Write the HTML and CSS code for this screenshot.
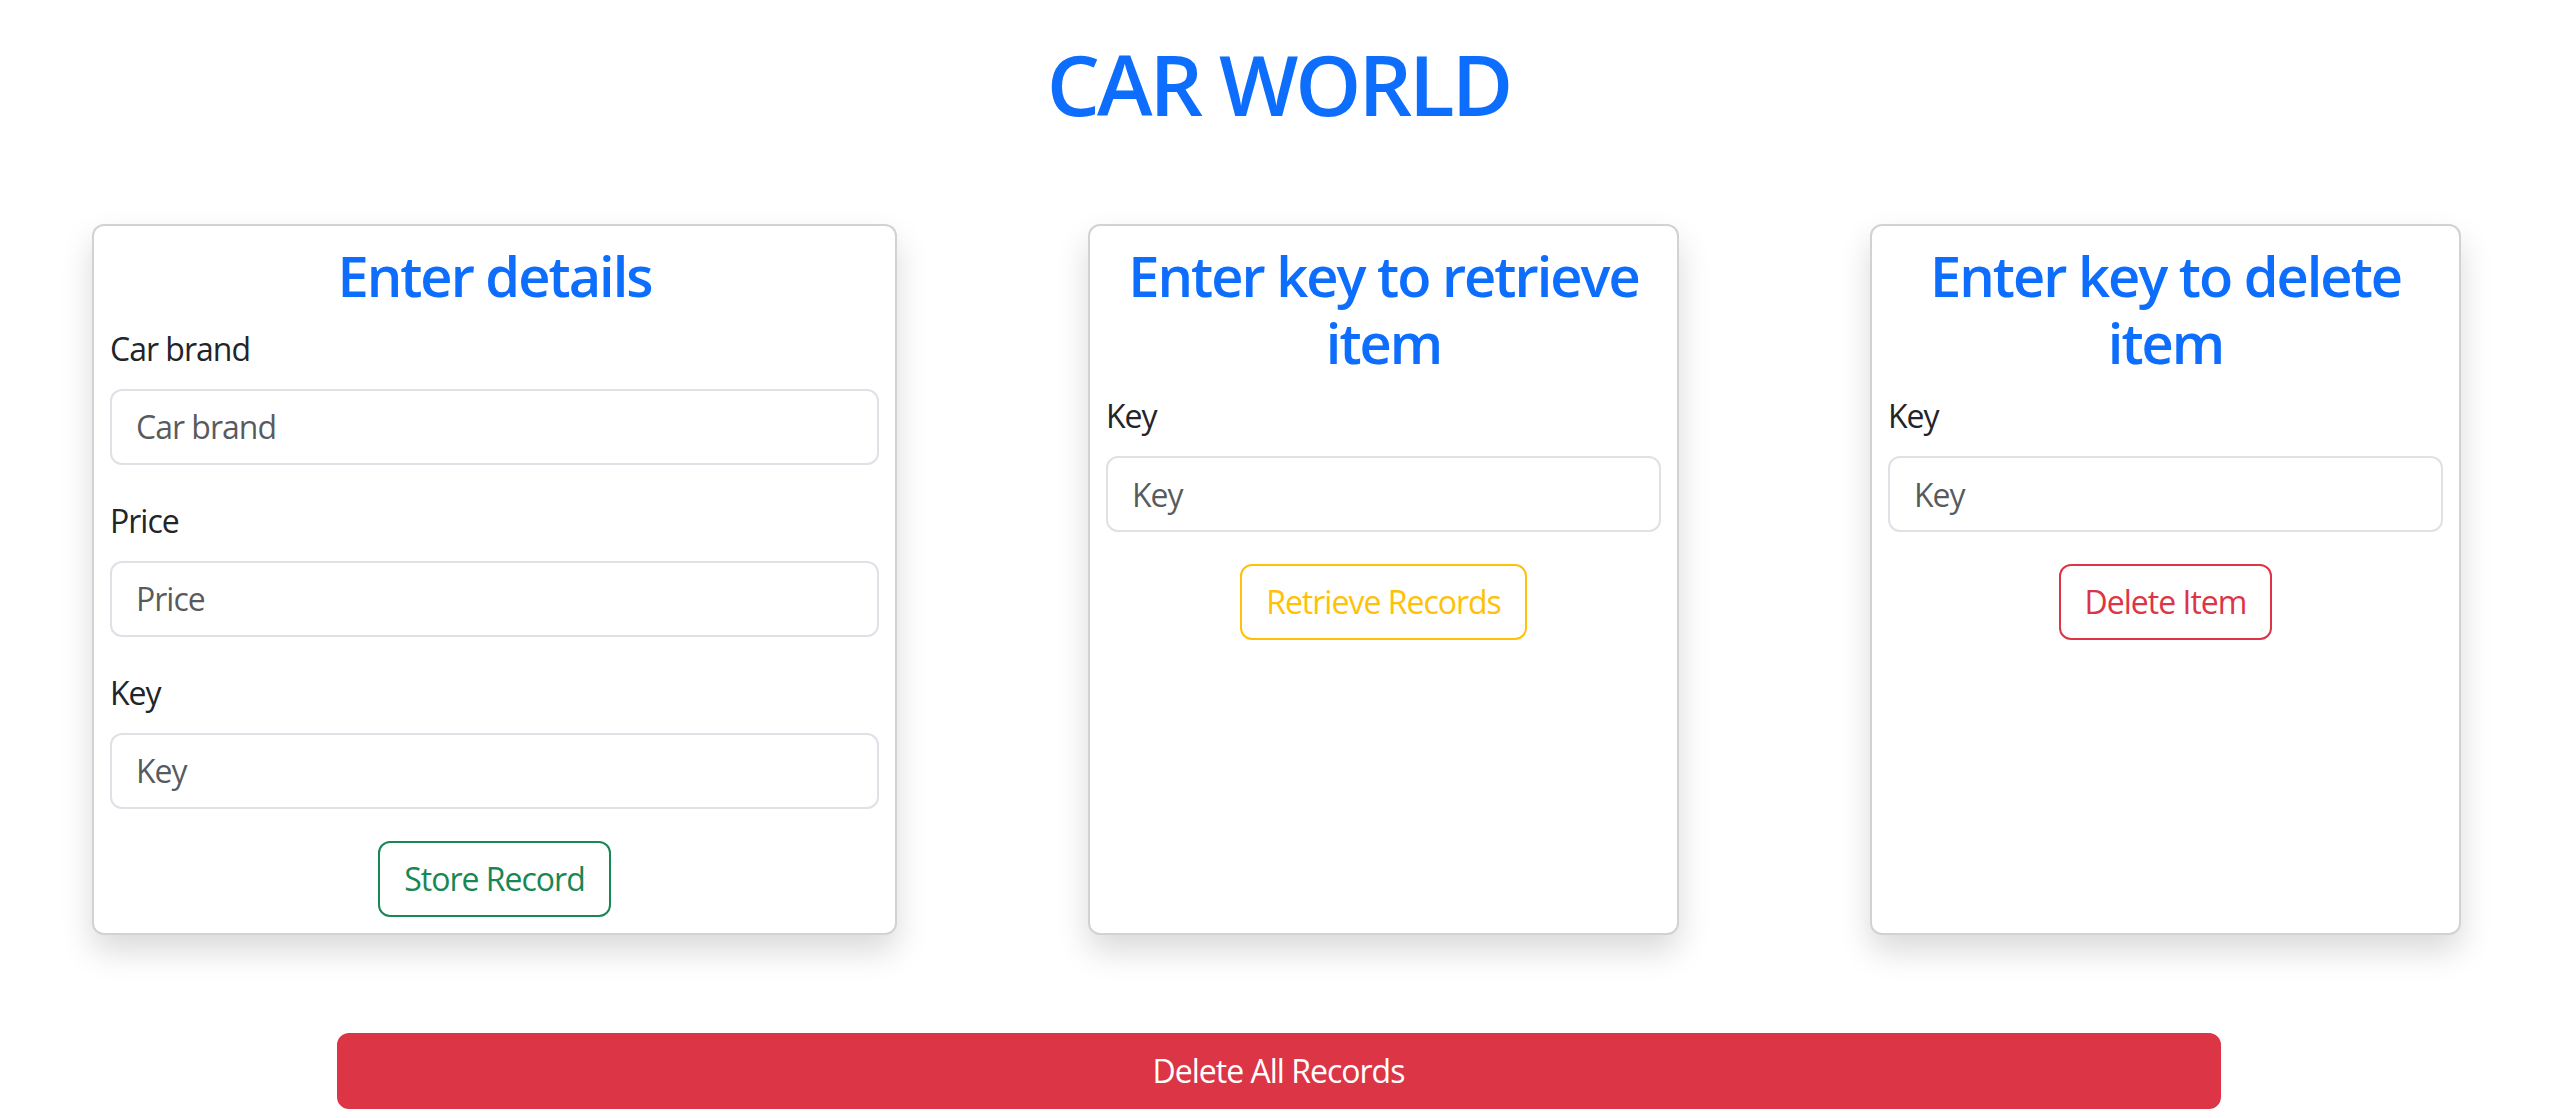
FILE: index.html
```html
<!DOCTYPE html>
<html lang="en">
<head>
<meta charset="utf-8">
<title>Car World</title>
<link rel="stylesheet" href="styles.css">
</head>
<body>
<div class="page">
  <h1 class="title">CAR WORLD</h1>
  <div class="cards">
    <div class="card card-wide">
      <h3 class="card-title">Enter details</h3>
      <div class="group">
        <label class="label">Car brand</label>
        <input class="field" type="text" placeholder="Car brand">
      </div>
      <div class="group">
        <label class="label">Price</label>
        <input class="field" type="text" placeholder="Price">
      </div>
      <div class="group">
        <label class="label">Key</label>
        <input class="field" type="text" placeholder="Key">
      </div>
      <div class="actions">
        <button class="btn btn-success">Store Record</button>
      </div>
    </div>
    <div class="card">
      <h3 class="card-title">Enter key to retrieve item</h3>
      <div class="group">
        <label class="label">Key</label>
        <input class="field" type="text" placeholder="Key">
      </div>
      <div class="actions">
        <button class="btn btn-warning">Retrieve Records</button>
      </div>
    </div>
    <div class="card">
      <h3 class="card-title">Enter key to delete item</h3>
      <div class="group">
        <label class="label">Key</label>
        <input class="field" type="text" placeholder="Key">
      </div>
      <div class="actions">
        <button class="btn btn-danger">Delete Item</button>
      </div>
    </div>
  </div>
  <button class="delete-all">Delete All Records</button>
</div>
</body>
</html>
```
FILE: styles.css
```css
html, body {
  margin: 0;
  padding: 0;
  background: #ffffff;
}
body {
  font-family: "Open Sans", "Noto Sans", sans-serif;
  color: #212529;
  font-size: 32px;
  line-height: 1.5;
  letter-spacing: -1px;
}
.page {
  padding-top: 34px;
}
.title {
  margin: 0;
  text-align: center;
  font-size: 84px;
  line-height: 1.2;
  font-weight: 600;
  letter-spacing: -3px;
  color: #0d6efd;
}
.cards {
  display: flex;
  justify-content: space-between;
  align-items: stretch;
  margin-top: 89px;
  padding: 0 96px 0 92px;
}
.card {
  box-sizing: border-box;
  width: 591px;
  padding: 16px;
  background: #fff;
  border: 2px solid rgba(0, 0, 0, 0.175);
  border-radius: 12px;
  box-shadow: 0 16px 32px rgba(0, 0, 0, 0.15);
}
.card-wide {
  width: 805px;
}
.card-title {
  margin: 0 0 16px;
  text-align: center;
  font-size: 56px;
  line-height: 1.2;
  font-weight: 600;
  letter-spacing: -2px;
  color: #0d6efd;
}
.group {
  margin-bottom: 32px;
}
.label {
  display: block;
  margin-bottom: 16px;
  font-size: 32px;
  line-height: 48px;
  color: #212529;
}
.field {
  display: block;
  box-sizing: border-box;
  width: 100%;
  height: 76px;
  margin: 0;
  padding: 12px 24px;
  font-family: inherit;
  font-size: 32px;
  line-height: 48px;
  letter-spacing: -1px;
  color: #212529;
  background: #fff;
  border: 2px solid #dee2e6;
  border-radius: 12px;
  outline: none;
}
.field::placeholder {
  color: rgba(33, 37, 41, 0.75);
}
.actions {
  text-align: center;
}
.btn {
  display: inline-block;
  box-sizing: border-box;
  height: 76px;
  padding: 12px 24px;
  font-family: inherit;
  font-size: 32px;
  line-height: 48px;
  letter-spacing: -1px;
  background: transparent;
  border: 2px solid;
  border-radius: 12px;
}
.btn-success {
  color: #198754;
  border-color: #198754;
}
.btn-warning {
  color: #ffc107;
  border-color: #ffc107;
}
.btn-danger {
  color: #dc3545;
  border-color: #dc3545;
}
.delete-all {
  display: block;
  box-sizing: border-box;
  width: 1884px;
  height: 76px;
  margin: 98px auto 0;
  padding: 12px 24px;
  font-family: inherit;
  font-size: 32px;
  line-height: 48px;
  letter-spacing: -1px;
  color: #fff;
  background: #dc3545;
  border: 2px solid #dc3545;
  border-radius: 12px;
}
```
